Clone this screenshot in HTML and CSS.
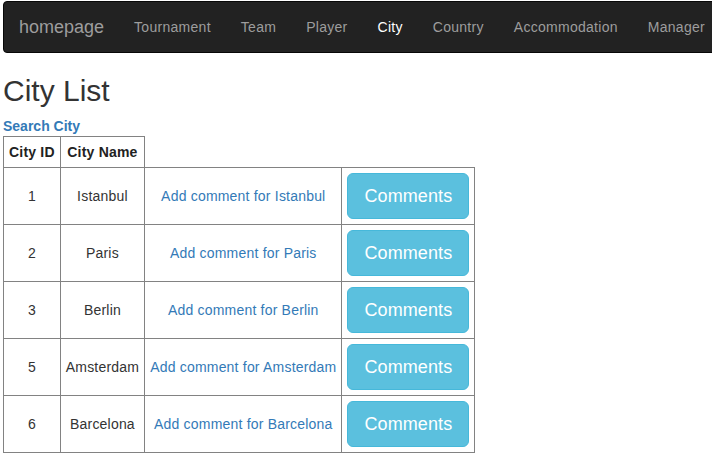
FILE: index.html
```html
<!DOCTYPE html>
<html>
<head>
<meta charset="utf-8">
<title>City List</title>
<link rel="stylesheet" href="styles.css">
</head>
<body>
<nav class="navbar">
  <a class="brand" href="#">homepage</a>
  <ul class="nav">
    <li><a href="#">Tournament</a></li>
    <li><a href="#">Team</a></li>
    <li><a href="#">Player</a></li>
    <li class="active"><a href="#">City</a></li>
    <li><a href="#">Country</a></li>
    <li><a href="#">Accommodation</a></li>
    <li><a href="#">Manager</a></li>
  </ul>
</nav>
<main class="content">
  <h1 class="title">City List</h1>
  <a class="search" href="#">Search City</a>
  <table class="cities">
    <thead>
      <tr><th>City ID</th><th>City Name</th></tr>
    </thead>
    <tbody>
      <tr><td>1</td><td>Istanbul</td><td><a href="#">Add comment for Istanbul</a></td><td><a class="btn" href="#">Comments</a></td></tr>
      <tr><td>2</td><td>Paris</td><td><a href="#">Add comment for Paris</a></td><td><a class="btn" href="#">Comments</a></td></tr>
      <tr><td>3</td><td>Berlin</td><td><a href="#">Add comment for Berlin</a></td><td><a class="btn" href="#">Comments</a></td></tr>
      <tr><td>5</td><td>Amsterdam</td><td><a href="#">Add comment for Amsterdam</a></td><td><a class="btn" href="#">Comments</a></td></tr>
      <tr><td>6</td><td>Barcelona</td><td><a href="#">Add comment for Barcelona</a></td><td><a class="btn" href="#">Comments</a></td></tr>
    </tbody>
  </table>
</main>
</body>
</html>
```
FILE: styles.css
```css
html, body {
  margin: 0;
  padding: 0;
  overflow: hidden;
  background: #fff;
}
body {
  font-family: "Liberation Sans", Arial, sans-serif;
  font-size: 14px;
  line-height: 20px;
  letter-spacing: 0.2px;
  color: #333;
}
a {
  text-decoration: none;
  color: #337ab7;
}
.navbar {
  display: flex;
  align-items: center;
  box-sizing: border-box;
  height: 52px;
  margin: 1px -20px 0 3px;
  background: #222;
  border: 1px solid #080808;
  border-radius: 4px;
  white-space: nowrap;
}
.brand {
  padding: 15px;
  font-size: 18px;
  line-height: 20px;
  letter-spacing: 0;
  color: #9d9d9d;
}
.nav {
  display: flex;
  margin: 0;
  padding: 0;
  list-style: none;
}
.nav a {
  display: block;
  padding: 15px;
  line-height: 20px;
  letter-spacing: 0.28px;
  color: #9d9d9d;
}
.nav .active a {
  color: #fff;
}
.content {
  padding: 0 3px;
}
.title {
  margin: 21px 0 9px;
  font-size: 30px;
  line-height: 33px;
  font-weight: 500;
  letter-spacing: 0;
}
.search {
  display: block;
  font-weight: bold;
  letter-spacing: 0;
}
.cities {
  border-collapse: collapse;
}
.cities th,
.cities td {
  border: 1px solid #828282;
  padding: 5px;
  text-align: center;
  vertical-align: middle;
}
.cities th {
  font-weight: bold;
  color: #222;
}
.btn {
  display: block;
  padding: 10px 16px;
  font-size: 18px;
  line-height: 24px;
  letter-spacing: 0.1px;
  color: #fff;
  background: #5bc0de;
  border: 1px solid #46b8da;
  border-radius: 6px;
}
```
